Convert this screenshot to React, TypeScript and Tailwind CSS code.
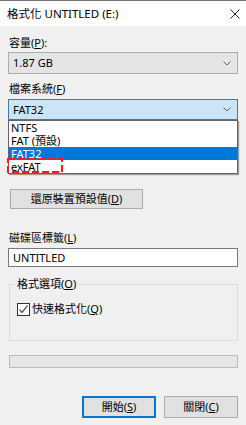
import React from 'react'

const font = { fontFamily: '"Segoe UI", "Noto Sans", "Noto Sans CJK TC", sans-serif' }

function Chevron() {
  return (
    <svg width="8" height="5" viewBox="0 0 8 5" className="shrink-0">
      <polyline points="0.5,0.5 4,4 7.5,0.5" fill="none" stroke="#606060" strokeWidth="1" />
    </svg>
  )
}

function Key({ k }: { k: string }) {
  return <span className="underline underline-offset-1">{k}</span>
}

export default function App() {
  return (
    <div className="w-[246px] h-[425px] bg-[#f0f0f0] text-[11px] leading-[16px] text-black overflow-hidden" style={font}>
      {/* Title bar */}
      <div className="h-[26px] bg-white border-t border-[#777777] flex items-center justify-between pl-[7px] pr-[6px]">
        <span className="text-[11.5px]">格式化 UNTITLED (E:)</span>
        <svg width="10" height="10" viewBox="0 0 10 10">
          <path d="M0.5 0.5 L9.5 9.5 M9.5 0.5 L0.5 9.5" stroke="#222" strokeWidth="1" />
        </svg>
      </div>

      <div className="px-[8px]">
        {/* Capacity */}
        <div className="mt-[9px] h-[16px] pl-[1px]">
          容量(<Key k="P" />):
        </div>
        <div className="mt-[1px] h-[22px] flex items-center justify-between bg-[#e5e5e5] border border-[#adadad] pl-[4px] pr-[6px]">
          <span>1.87 GB</span>
          <Chevron />
        </div>

        {/* File system */}
        <div className="mt-[7px] h-[16px] pl-[1px]">
          檔案系統(<Key k="F" />)
        </div>
        <div className="relative mt-[2px]">
          <div className="h-[21px] flex items-center justify-between bg-[#cce4f7] border border-[#3d7bad] pl-[4px] pr-[6px]">
            <span>FAT32</span>
            <Chevron />
          </div>
          <div className="absolute left-0 right-0 top-[21px] z-10 bg-white border border-[#646464] shadow-[1px_1px_1px_rgba(0,0,0,0.35)]">
            <div className="h-[13px] leading-[13px] pl-[2px]">NTFS</div>
            <div className="h-[13px] leading-[13px] pl-[2px]">FAT (預設)</div>
            <div className="h-[13px] leading-[13px] pl-[2px] bg-[#0078d7] text-white">FAT32</div>
            <div className="relative h-[13px] leading-[13px] pl-[2px]">
              exFAT
              <svg width="56" height="15" viewBox="0 0 56 15" className="absolute -left-[2px] -top-[2px]">
                <rect x="1" y="1" width="54" height="13" fill="none" stroke="#ff1a1a" strokeWidth="2" strokeDasharray="7 3" />
              </svg>
            </div>
          </div>
        </div>

        {/* area covered by the open list */}
        <div className="h-[69px]" />

        <button className="ml-[2px] w-[133px] h-[20px] bg-[#e1e1e1] border border-[#adadad] text-center">
          還原裝置預設值(<Key k="D" />)
        </button>

        {/* Volume label */}
        <div className="mt-[21px] h-[16px] pl-[1px]">
          磁碟區標籤(<Key k="L" />)
        </div>
        <div className="mt-[2px] h-[19px] flex items-center bg-white border border-[#7a7a7a] pl-[4px]">
          UNTITLED
        </div>

        {/* Format options group */}
        <div className="relative mt-[17px] ml-[1px] h-[57px] border border-[#dcdcdc]">
          <span className="absolute left-[5px] -top-[9px] bg-[#f0f0f0] px-[2px]">
            格式選項(<Key k="O" />)
          </span>
          <div className="mt-[16px] ml-[7px] flex items-center gap-[2px]">
            <span className="w-[13px] h-[13px] bg-white border border-[#333333] flex items-center justify-center">
              <svg width="11" height="11" viewBox="0 0 11 11">
                <polyline points="1.5,5.5 4,8.5 9.5,1.5" fill="none" stroke="#222" strokeWidth="1.1" />
              </svg>
            </span>
            <span>
              快速格式化(<Key k="Q" />)
            </span>
          </div>
        </div>

        {/* Progress */}
        <div className="mt-[14px] ml-[1px] h-[13px] bg-[#e6e6e6] border border-[#bcbcbc]" />

        {/* Buttons */}
        <div className="mt-[28px] flex justify-end gap-[8px]">
          <button className="w-[74px] h-[22px] bg-[#e1e1e1] border-2 border-[#0078d7] text-center">
            開始(<Key k="S" />)
          </button>
          <button className="w-[74px] h-[22px] bg-[#e1e1e1] border border-[#adadad] text-center">
            關閉(<Key k="C" />)
          </button>
        </div>
      </div>
    </div>
  )
}
